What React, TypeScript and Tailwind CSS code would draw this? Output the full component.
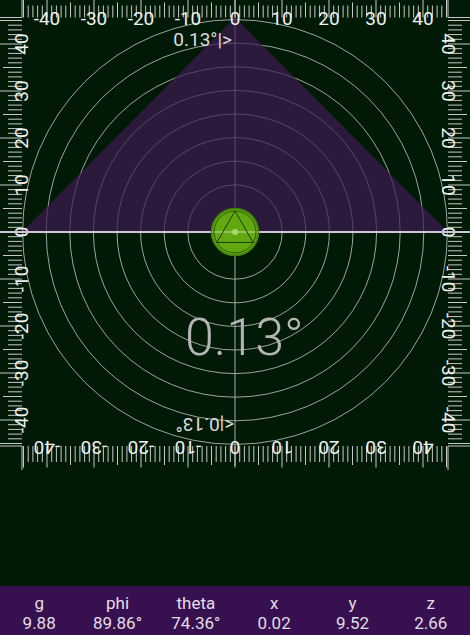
import React from 'react';

const U = 4.7;
const CX = 235;
const CY = 232;
const L = 22;
const R = 448;
const T = 17.5;
const B = 446;

const values = Array.from({ length: 91 }, (_, i) => i - 45);

const stats = [
  { label: 'g', value: '9.88' },
  { label: 'phi', value: '89.86°' },
  { label: 'theta', value: '74.36°' },
  { label: 'x', value: '0.02' },
  { label: 'y', value: '9.52' },
  { label: 'z', value: '2.66' },
];

function tickLen(v: number) {
  if (v % 10 === 0 || Math.abs(v) === 45) return 17.5;
  if (v % 5 === 0) return 15;
  return 12;
}

function LevelDial() {
  const rings = [1, 2, 3, 4, 5, 6, 7, 8, 9];
  const font = 'Roboto, "Liberation Sans", sans-serif';
  return (
    <svg width={470} height={470} className="block shrink-0">
      {/* rings + center lines under the triangle */}
      {rings.map((k) => (
        <circle key={k} cx={CX} cy={CY} r={23.6 * k} fill="none" stroke="#c4c4c4" strokeOpacity={0.8} strokeWidth={1} />
      ))}
      <line x1={CX} y1={0} x2={CX} y2={466} stroke="#a8a8a8" strokeWidth={1} />
      <polygon points={`${L},${CY} ${CX},${T} ${R},${CY}`} fill="#3d1b52" fillOpacity={0.7} />

      {/* top + bottom rulers */}
      {values.map((v) => {
        const x = CX + v * U;
        const len = tickLen(v);
        return (
          <g key={`h${v}`}>
            <line x1={x} y1={T - len} x2={x} y2={T} stroke="#c8c8c8" strokeWidth={1} />
            <line x1={x} y1={B} x2={x} y2={B + len + 4} stroke="#c8c8c8" strokeWidth={1} />
          </g>
        );
      })}
      {/* left + right rulers */}
      {values.map((v) => {
        const y = CY - v * U;
        const len = v % 10 === 0 || Math.abs(v) === 45 ? 22 : v % 5 === 0 ? 19 : 14;
        return (
          <g key={`v${v}`}>
            <line x1={L - len} y1={y} x2={L} y2={y} stroke="#c8c8c8" strokeWidth={1} />
            <line x1={R} y1={y} x2={R + len} y2={y} stroke="#c8c8c8" strokeWidth={1} />
          </g>
        );
      })}
      {/* corners */}
      <line x1={0} y1={T} x2={L} y2={T} stroke="#c8c8c8" />
      <line x1={L} y1={0} x2={L} y2={T} stroke="#c8c8c8" />
      <line x1={R} y1={T} x2={470} y2={T} stroke="#c8c8c8" />
      <line x1={R} y1={0} x2={R} y2={T} stroke="#c8c8c8" />
      <line x1={0} y1={B} x2={L} y2={B} stroke="#c8c8c8" />
      <line x1={L} y1={B} x2={L} y2={470} stroke="#c8c8c8" />
      <line x1={R} y1={B} x2={470} y2={B} stroke="#c8c8c8" />
      <line x1={R} y1={B} x2={R} y2={470} stroke="#c8c8c8" />

      {/* labels */}
      {[-40, -30, -20, -10, 0, 10, 20, 30, 40].map((v) => {
        const x = CX + v * U;
        const y = CY - v * U;
        const common = { fontFamily: font, fontSize: 19, fill: '#f0f0f0', textAnchor: 'middle' as const };
        return (
          <g key={`l${v}`}>
            <text {...common} x={x} y={25}>{v}</text>
            <text {...common} transform={`translate(${x},${441}) rotate(180)`}>{v}</text>
            <text {...common} transform={`translate(${28},${y}) rotate(-90)`}>{v}</text>
            <text {...common} transform={`translate(${442},${y}) rotate(90)`}>{v}</text>
          </g>
        );
      })}

      {/* angle pointers */}
      <text x={232} y={46} textAnchor="end" fontFamily={font} fontSize={19} fill="#dcdcdc">
        0.13°|&gt;
      </text>
      <text transform="translate(234,418) rotate(180)" textAnchor="start" fontFamily={font} fontSize={19} fill="#dcdcdc">
        &lt;|0.13°
      </text>

      {/* big reading */}
      <text x={185} y={355} fontFamily={font} fontWeight={300} fontSize={52} fill="#b4b4b4">
        0.13°
      </text>

      {/* horizon line */}
      <line x1={0} y1={CY} x2={470} y2={CY} stroke="#cfc6dc" strokeWidth={2} />

      {/* bubble */}
      <circle cx={CX} cy={CY} r={23.5} fill="#62a810" stroke="#3f7d06" strokeWidth={1.5} />
      <line x1={CX - 23} y1={CY} x2={CX + 23} y2={CY} stroke="#ffffff" strokeOpacity={0.3} strokeWidth={2} />
      <circle cx={CX} cy={CY} r={21} fill="none" stroke="#2b5800" strokeWidth={1} />
      <polygon
        points={`${CX},${CY - 21} ${CX - 18.2},${CY + 10.5} ${CX + 18.2},${CY + 10.5}`}
        fill="none"
        stroke="#1d3d00"
        strokeWidth={1}
      />
      <circle cx={CX} cy={CY} r={3} fill="#a6d86c" />
    </svg>
  );
}

export default function App() {
  return (
    <div className="w-full h-[635px] bg-[#001a06] flex flex-col overflow-hidden">
      <LevelDial />
      <div className="flex-1" />
      <div className="h-[49px] bg-[#37114f] grid grid-cols-6 pt-[7px] text-center text-[17px] leading-[20px] text-[#e2dde6] font-['Roboto','Liberation_Sans',sans-serif]">
        {stats.map((s) => (
          <div key={s.label} className="flex flex-col">
            <span>{s.label}</span>
            <span>{s.value}</span>
          </div>
        ))}
      </div>
    </div>
  );
}
